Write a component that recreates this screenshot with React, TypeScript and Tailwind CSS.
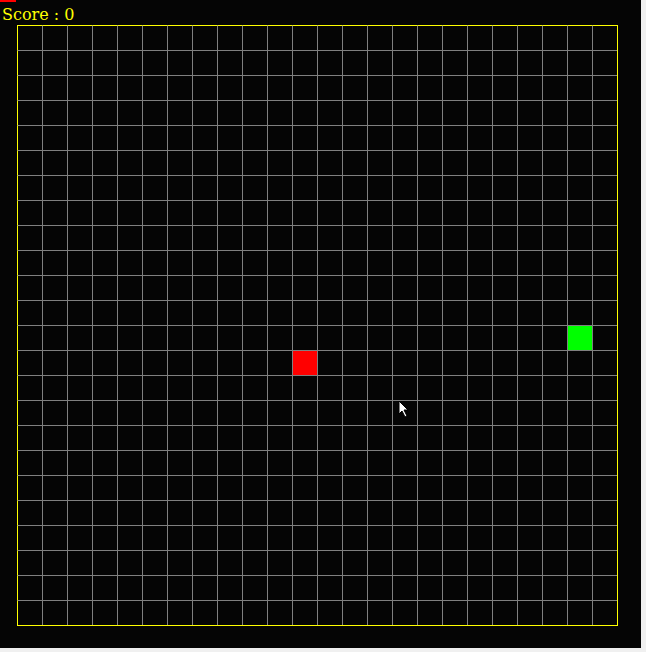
import React from "react";

const COLS = 24;
const ROWS = 24;
const FOOD = { col: 11, row: 13 };
const SNAKE = { col: 22, row: 12 };

function Cell({ col, row }: { col: number; row: number }) {
  const isFood = col === FOOD.col && row === FOOD.row;
  const isSnake = col === SNAKE.col && row === SNAKE.row;
  return (
    <div
      className={[
        "w-[25px] h-[25px] border-l border-t",
        col === 0 ? "border-l-[#ffff00]" : "border-l-[#808080]",
        row === 0 ? "border-t-[#ffff00]" : "border-t-[#808080]",
        isFood ? "bg-[#ff0000]" : isSnake ? "bg-[#00ff00]" : "bg-transparent",
      ].join(" ")}
    />
  );
}

export default function App() {
  const cells = [];
  for (let r = 0; r < ROWS; r++) {
    for (let c = 0; c < COLS; c++) {
      cells.push(<Cell key={`${r}-${c}`} col={c} row={r} />);
    }
  }

  return (
    <div className="min-h-screen bg-[#f0f0f0]">
      <div className="relative w-[641px] h-[648px] bg-[#050505] flex flex-col">
        <div className="w-[16px] h-[2px] bg-[#ff0000]" />
        <div className="h-[23px] pl-[2px] text-[16px] leading-[26px] text-[#ffff00] font-['DejaVu_Serif',serif]">
          Score : 0
        </div>
        <div className="ml-[17px] w-[601px] h-[601px] border-r border-b border-[#ffff00] grid grid-cols-[repeat(24,25px)] grid-rows-[repeat(24,25px)]">
          {cells}
        </div>

        {/* mouse pointer captured in the shot */}
        <svg className="absolute left-[398px] top-[400px]" width="12" height="18" viewBox="0 0 12 18">
          <path d="M1 1 L1 14 L4 11 L7 17 L9 16 L6 10 L10 10 Z" fill="#ffffff" stroke="#000000" strokeWidth="1" />
        </svg>
      </div>
    </div>
  );
}
